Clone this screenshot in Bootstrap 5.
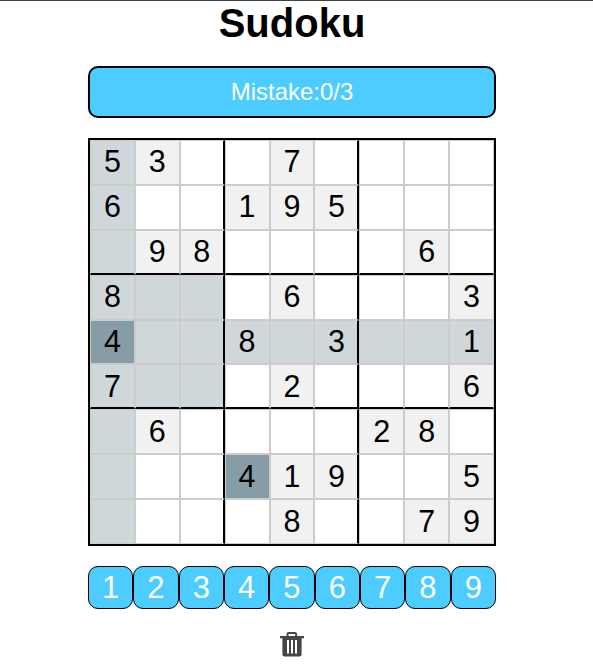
<!DOCTYPE html>
<html lang="en">
<head>
<meta charset="utf-8">
<meta name="viewport" content="width=device-width, initial-scale=1">
<title>Sudoku</title>
<link href="https://cdn.jsdelivr.net/npm/bootstrap@5.3.0/dist/css/bootstrap.min.css" rel="stylesheet">
<style>
body { font-family: "Liberation Sans", Arial, sans-serif; color: #000; background: #fff; border-top: 1px solid #3f4045; height: 670px; overflow: hidden; }
.game { width: 408px; margin-left: 88px; }
.title { font-size: 40px; line-height: 44px; height: 65px; }
.mistakes { height: 52px; background: #4dccff; border: 2px solid #000; border-radius: 10px; font-size: 24px; line-height: 1; }
.board { display: grid; grid-template: repeat(9, 1fr) / repeat(9, 1fr); height: 408px; margin-top: 20px; border: 2px solid #000; font-size: 30.5px; }
.cell { display: flex; align-items: center; justify-content: center; min-width: 0; min-height: 0; border: 1px solid #ccc; line-height: 30px; padding-bottom: 2px; }
.cell:nth-child(9n+3), .cell:nth-child(9n+6) { border-right: 2px solid #000; }
.cell:nth-child(n+19):nth-child(-n+27), .cell:nth-child(n+46):nth-child(-n+54) { border-bottom: 2px solid #000; padding-bottom: 1px; }
.given { background: #f1f1f1; }
.related { background: #cfd7da; }
.chosen { background: #869da7; }
.keys { margin-top: 20px; height: 43px; }
.key { flex: 1 1 0; background: #4dccff; border: 1px solid #000; border-radius: 10px; font-size: 31px; line-height: 1; padding: 0; color: #fff; }
.erase { margin-top: 22px; height: 28px; line-height: 0; }
</style>
<script src="https://cdn.jsdelivr.net/npm/bootstrap@5.3.0/dist/js/bootstrap.bundle.min.js"></script>
</head>
<body>
<main class="game d-flex flex-column">
  <h1 class="title fw-bold text-center m-0">Sudoku</h1>
  <div class="mistakes text-white d-flex align-items-center justify-content-center">Mistake:0/3</div>
  <div class="board" id="board"></div>
  <div class="keys d-flex" id="keys"></div>
  <button class="erase btn p-0 border-0 align-self-center" aria-label="Erase">
    <svg width="26" height="28" viewBox="0 0 26 28">
      <path d="M8.5 6V3.2Q8.5 1.9 9.8 1.9H15.8Q17.1 1.9 17.1 3.2V6" fill="none" stroke="#454549" stroke-width="2"/>
      <path fill="#454549" fill-rule="evenodd" d="M1 5H25V7.2H22.6V23.6Q22.6 25.6 20.6 25.6H5.4Q3.4 25.6 3.4 23.6V7.2H1ZM8 9V22.6H10V9ZM12 9V22.6H14V9ZM16 9V22.6H18V9Z"/>
    </svg>
  </button>
</main>
<script>
const rows = ["53..7....", "6..195...", ".98....6.", "8...6...3", "4..8.3..1", "7...2...6", ".6....28.", "...419..5", "....8..79"];
const pick = { r: 4, c: 0 };
const board = document.getElementById("board");
rows.forEach((row, r) => [...row].forEach((v, c) => {
  const el = document.createElement("div");
  const sameBox = Math.floor(r / 3) === Math.floor(pick.r / 3) && Math.floor(c / 3) === Math.floor(pick.c / 3);
  let state = "";
  if (v === rows[pick.r][pick.c]) state = " chosen";
  else if (r === pick.r || c === pick.c || sameBox) state = " related";
  else if (v !== ".") state = " given";
  el.className = "cell" + state;
  el.textContent = v === "." ? "" : v;
  board.append(el);
}));
for (let n = 1; n <= 9; n++) {
  const key = document.createElement("button");
  key.className = "key";
  key.textContent = n;
  document.getElementById("keys").append(key);
}
</script>
</body>
</html>
